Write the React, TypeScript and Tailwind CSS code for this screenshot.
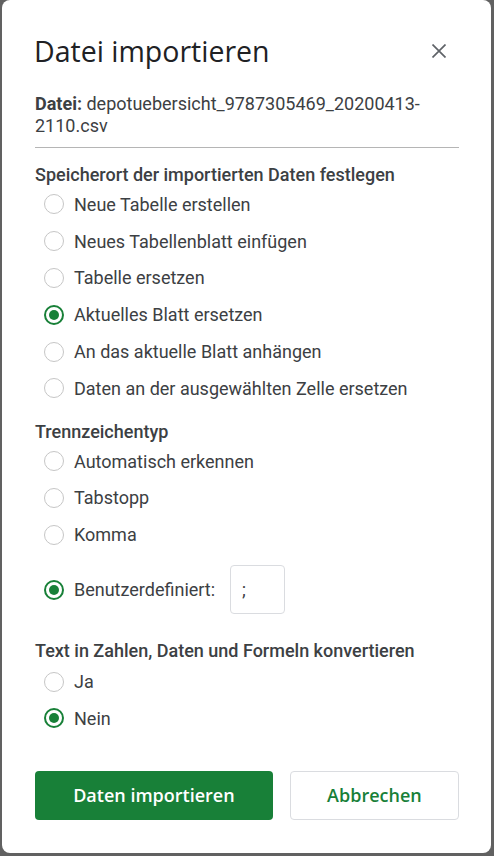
type Opt = { label: string; checked?: boolean };

const Radio = ({ checked }: { checked?: boolean }) =>
  checked ? (
    <span className="w-5 h-5 rounded-full border-[2.5px] border-[#188038] flex items-center justify-center shrink-0">
      <span className="w-[10px] h-[10px] rounded-full bg-[#188038]" />
    </span>
  ) : (
    <span className="w-5 h-5 rounded-full border border-[#c6c6c6] shrink-0" />
  );

const Row = ({ label, checked }: Opt) => (
  <label className="flex items-center h-[36.8px] pl-[9px] gap-[10px] text-[18px] text-[#3c4043]">
    <Radio checked={checked} />
    <span>{label}</span>
  </label>
);

const target: Opt[] = [
  { label: "Neue Tabelle erstellen" },
  { label: "Neues Tabellenblatt einfügen" },
  { label: "Tabelle ersetzen" },
  { label: "Aktuelles Blatt ersetzen", checked: true },
  { label: "An das aktuelle Blatt anhängen" },
  { label: "Daten an der ausgewählten Zelle ersetzen" },
];

const separators: Opt[] = [
  { label: "Automatisch erkennen" },
  { label: "Tabstopp" },
  { label: "Komma" },
];

const googleSans = { fontFamily: "'Open Sans', Roboto, sans-serif" };

export default function App() {
  return (
    <div
      className="h-[856px] bg-[#616161] pl-[2px] pr-[3px] pb-[3px]"
      style={{ fontFamily: "Roboto, 'Liberation Sans', sans-serif" }}
    >
      <div className="h-full bg-white rounded-lg pl-[33px] pr-[32px] pt-[33px]">
        {/* Header */}
        <div className="flex items-center justify-between">
          <h1 className="text-[28.5px] leading-[36px] text-[#202124] -ml-[1px]" style={googleSans}>
            Datei importieren
          </h1>
          <button className="mr-[13px] text-[#5f6368]">
            <svg width="14" height="14" viewBox="0 0 14 14" stroke="currentColor" strokeWidth="1.7">
              <path d="M0.5 0.5 L13.5 13.5 M13.5 0.5 L0.5 13.5" />
            </svg>
          </button>
        </div>

        <p className="mt-[24px] text-[18px] leading-[22px] text-[#3c4043]">
          <span className="font-bold">Datei:</span> depotuebersicht_9787305469_20200413-
          <br />
          2110.csv
        </p>
        <div className="mt-[10px] border-b border-[#b5b5b5]" />

        {/* Speicherort */}
        <h2 className="mt-[16px] text-[18px] leading-[22px] font-medium text-[#3c4043]">
          Speicherort der importierten Daten festlegen
        </h2>
        {target.map((o) => (
          <Row key={o.label} {...o} />
        ))}

        {/* Trennzeichen */}
        <h2 className="mt-[14px] text-[18px] leading-[22px] font-medium text-[#3c4043]">
          Trennzeichentyp
        </h2>
        {separators.map((o) => (
          <Row key={o.label} {...o} />
        ))}
        <div className="mt-[12px] flex items-center pl-[9px] gap-[10px] text-[18px] text-[#3c4043]">
          <Radio checked />
          <span>Benutzerdefiniert:</span>
          <div className="ml-[5px] w-[55px] h-[49px] rounded border border-[#dadce0] flex items-center pl-[11px]">
            ;
          </div>
        </div>

        {/* Konvertieren */}
        <h2 className="mt-[26px] text-[18px] leading-[22px] font-medium text-[#3c4043]">
          Text in Zahlen, Daten und Formeln konvertieren
        </h2>
        <div className="mt-[1px]">
          <Row label="Ja" />
          <Row label="Nein" checked />
        </div>

        {/* Buttons */}
        <div className="mt-[34px] flex gap-[17px]" style={googleSans}>
          <button className="w-[239px] h-[49px] rounded bg-[#188038] text-white text-[18px] font-semibold">
            Daten importieren
          </button>
          <button className="w-[170px] h-[49px] rounded border border-[#dadce0] text-[#188038] text-[18px] font-semibold">
            Abbrechen
          </button>
        </div>
      </div>
    </div>
  );
}
